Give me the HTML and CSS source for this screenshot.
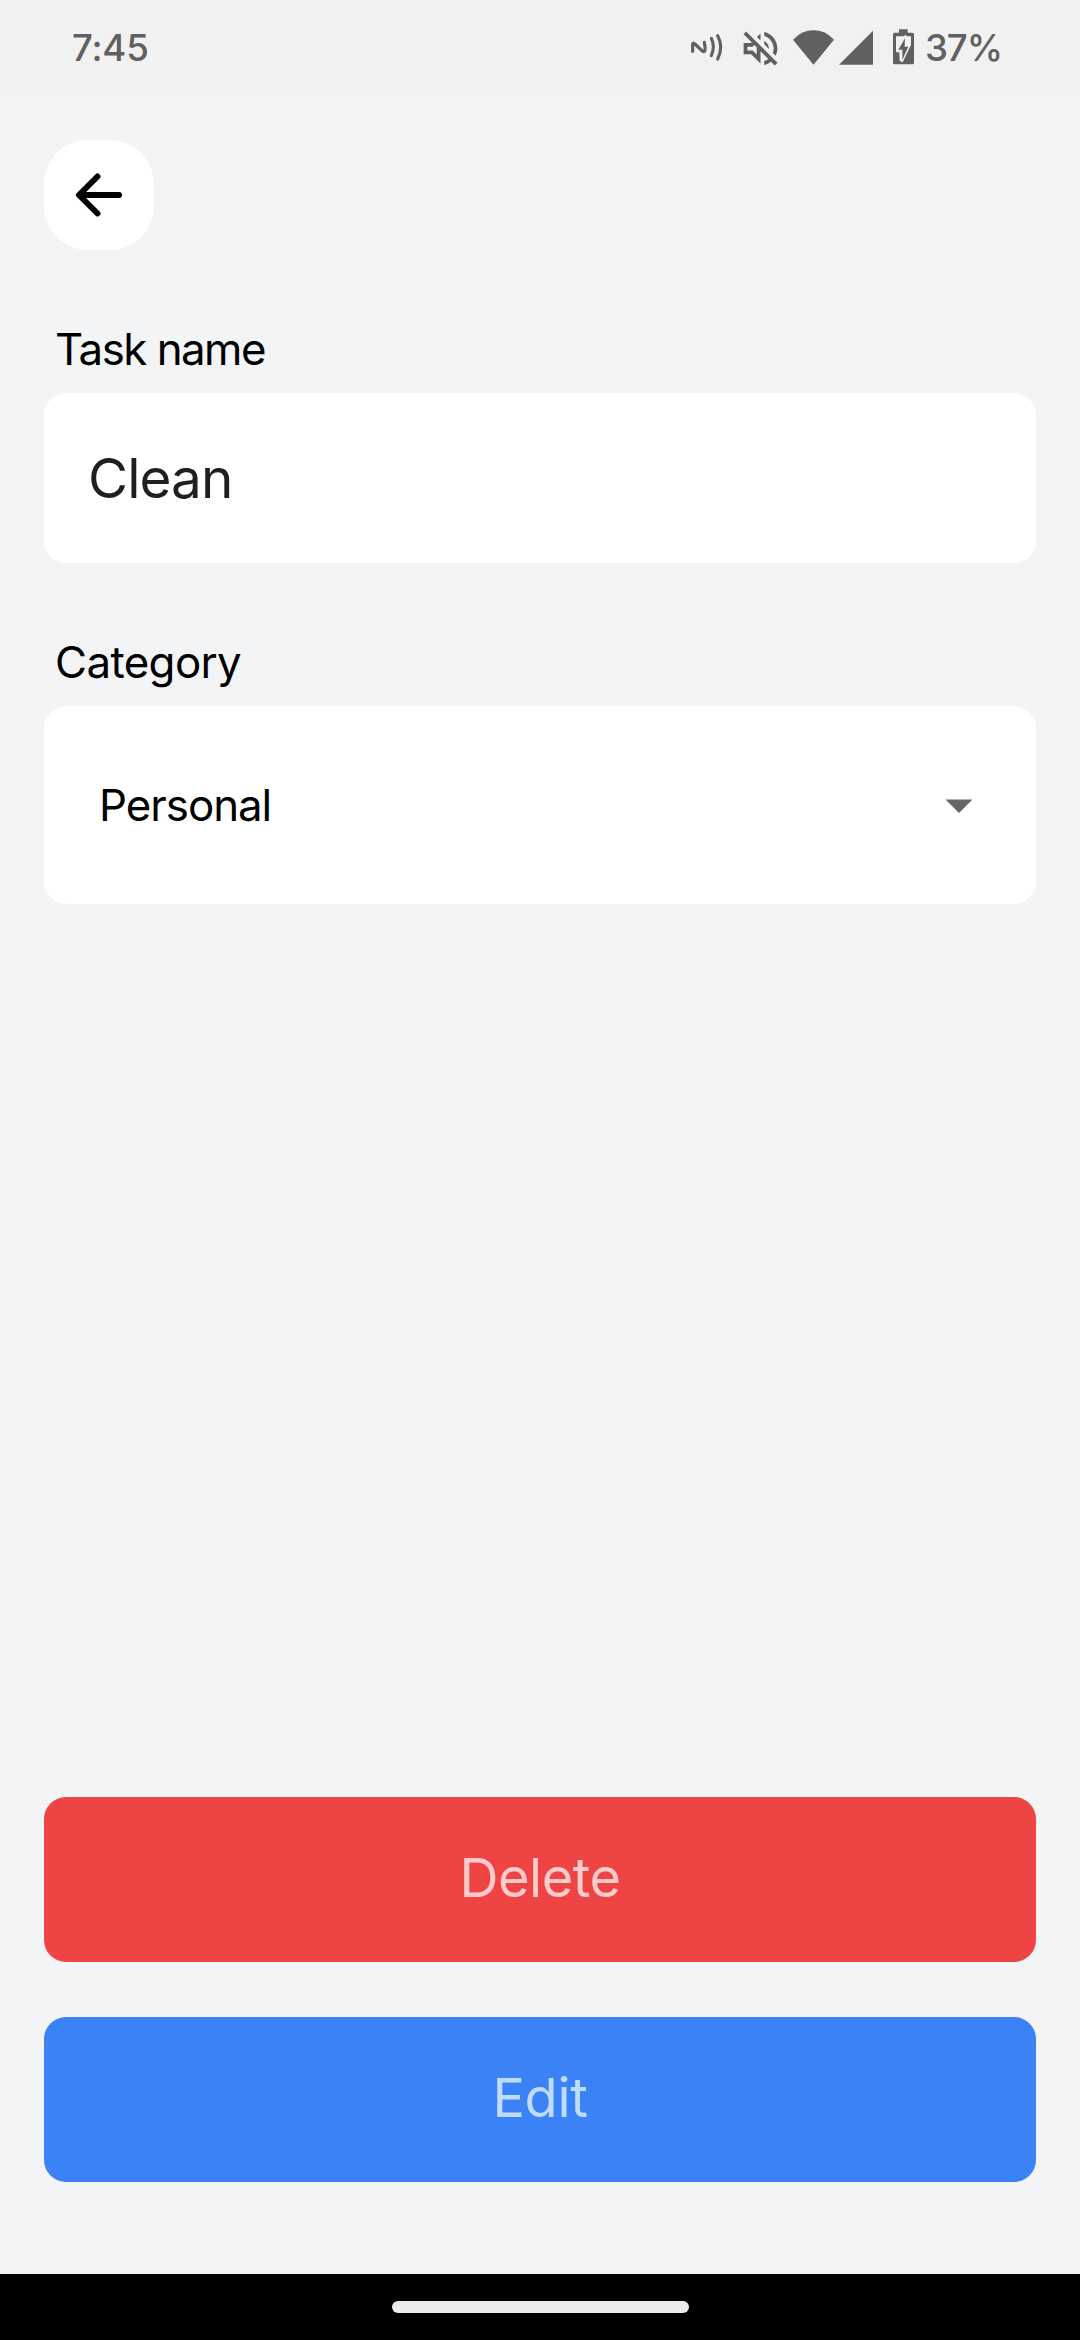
FILE: index.html
```
<!DOCTYPE html>
<html lang="en">
<head>
<meta charset="utf-8">
<title>Edit task</title>
<link rel="stylesheet" href="styles.css">
</head>
<body>
<header class="status-bar">
  <span class="status-time">7:45</span>
  <div class="status-icons">
    <svg class="icon-nfc" viewBox="0 0 114 102" fill="none" stroke="#606060" stroke-width="9.5" stroke-linecap="round" stroke-linejoin="round"><path d="M14 64V42Q16 36 21 42L44 64Q50 67 51 60Q52 50 49 37M70 25Q82 49 70 77M89 17Q107 50 89 87"/></svg>
    <svg class="icon-mute" viewBox="0 0 24 24" fill="#606060"><path d="M4.34 2.93L2.93 4.34 7.29 8.7 7 9H3v6h4l5 5v-6.59l4.18 4.18c-.65.49-1.38.88-2.18 1.11v2.06c1.34-.3 2.57-.92 3.61-1.75l2.05 2.05 1.41-1.41L4.34 2.93zM10 15.17L7.83 13H5v-2h2.83l.88-.88L10 11.41v3.76zM19 12c0 .82-.15 1.61-.41 2.34l1.53 1.53c.56-1.17.88-2.48.88-3.87 0-4.28-2.99-7.86-7-8.77v2.06c2.89.86 5 3.54 5 6.71zm-7-8l-1.88 1.88L12 7.76V4zm4.5 8c0-1.77-1.02-3.29-2.5-4.03v1.79l2.48 2.48c.01-.08.02-.16.02-.24z"/></svg>
    <svg class="icon-wifi" viewBox="0 0 123 105" fill="#606060"><path d="M61.5 104L0 29Q26 1 61.5 1T123 29Z"/></svg>
    <svg class="icon-signal" viewBox="0 0 102 105" fill="#606060"><path d="M0 104L102 2V104Z"/></svg>
    <svg class="icon-battery" viewBox="0 0 63 108" fill="#606060"><path d="M18 1H44V11H58Q63 11 63 16V101Q63 106 58 106H5Q0 106 0 101V16Q0 11 5 11H18Z"/><path fill="#f1f1f1" d="M9 22H32L38 17L42 22H54V48L47 62L29 100L20 96L19 70H9Z"/><path d="M36 28L16 62H28V92L46 53H35Z"/></svg>
    <span class="status-percent">37%</span>
  </div>
</header>
<main class="screen">
  <button class="back" aria-label="Back">
    <svg class="icon-back" viewBox="0 0 48 44" fill="none" stroke="#000" stroke-width="6" stroke-linecap="round" stroke-linejoin="round"><path d="M44 22H5M22.5 3.5L4 22L22.5 40.5"/></svg>
  </button>
  <section class="field field-name">
    <label class="label label-name">Task name</label>
    <div class="box input"><span class="input-text">Clean</span></div>
  </section>
  <section class="field field-category">
    <label class="label label-category">Category</label>
    <div class="box select">
      <span class="select-text">Personal</span>
      <svg class="icon-caret" viewBox="0 0 28 14" fill="#666"><path d="M.5 .4H27.5L14 14Z"/></svg>
    </div>
  </section>
  <div class="actions">
    <button class="action delete">Delete</button>
    <button class="action edit">Edit</button>
  </div>
</main>
<footer class="nav-bar"><div class="nav-pill"></div></footer>
</body>
</html>
```
FILE: styles.css
```
* {
  box-sizing: border-box;
}

body {
  margin: 0;
  width: 1080px;
  height: 2340px;
  display: flex;
  flex-direction: column;
  background: #f3f4f6;
  font-family: Inter, "Liberation Sans", sans-serif;
  font-weight: 370;
  color: #000;
}

svg {
  display: block;
  flex: none;
}

button {
  border: 0;
  font-family: inherit;
  font-weight: inherit;
}

.status-bar {
  height: 96px;
  flex: none;
  display: flex;
  justify-content: space-between;
  background: #f1f1f1;
  padding: 0 0 0 72px;
  color: #606060;
  font-size: 36.6px;
  font-weight: 500;
  line-height: 96px;
}

.status-time {
  letter-spacing: -0.2px;
}

.status-icons {
  display: flex;
  align-items: flex-start;
  width: 392px;
}

.icon-nfc {
  width: 38px;
  height: 34px;
  margin-top: 30px;
}

.icon-mute {
  width: 45px;
  height: 45px;
  margin: 26px 0 0 12px;
}

.icon-wifi {
  width: 41px;
  height: 35px;
  margin: 30px 0 0 10px;
}

.icon-signal {
  width: 34px;
  height: 35px;
  margin: 30px 0 0 5px;
}

.icon-battery {
  width: 21px;
  height: 36px;
  margin: 29px 0 0 20px;
}

.status-percent {
  margin-left: 11px;
  letter-spacing: -1.1px;
}

.screen {
  flex: 1;
  display: flex;
  flex-direction: column;
  padding: 44px 44px 92px;
}

.back {
  width: 110px;
  height: 110px;
  flex: none;
  display: flex;
  align-items: center;
  justify-content: center;
  padding: 0;
  border-radius: 44px;
  background: #fff;
}

.icon-back {
  width: 48px;
  height: 44px;
}

.field {
  display: flex;
  flex-direction: column;
  gap: 15px;
  margin-top: 72px;
}

.label {
  height: 56px;
  line-height: 56px;
  padding-left: 11px;
  font-size: 43.8px;
}

.label-name {
  letter-spacing: -1.5px;
}

.label-category {
  letter-spacing: -0.6px;
}

.box {
  display: flex;
  align-items: center;
  border-radius: 22px;
  background: #fff;
}

.input {
  height: 170px;
  padding-left: 44px;
  color: #1f1f1f;
  font-size: 54.8px;
  letter-spacing: -0.9px;
}

.select {
  height: 198px;
  justify-content: space-between;
  padding: 0 63px 0 55px;
  font-size: 43.8px;
  letter-spacing: -1px;
}

.icon-caret {
  width: 28px;
  height: 14px;
  margin-top: 2px;
}

.actions {
  display: flex;
  flex-direction: column;
  gap: 55px;
  margin-top: auto;
}

.action {
  height: 165px;
  padding: 0 0 4px;
  border-radius: 22px;
  font-size: 54.1px;
}

.delete {
  background: #ef4444;
  color: #fecaca;
  letter-spacing: -0.5px;
}

.edit {
  background: #3b82f6;
  color: #bfdbfe;
  letter-spacing: -0.3px;
}

.nav-bar {
  height: 66px;
  flex: none;
  display: flex;
  align-items: center;
  justify-content: center;
  background: #000;
}

.nav-pill {
  width: 297px;
  height: 12px;
  border-radius: 6px;
  background: #ebebeb;
}
```
